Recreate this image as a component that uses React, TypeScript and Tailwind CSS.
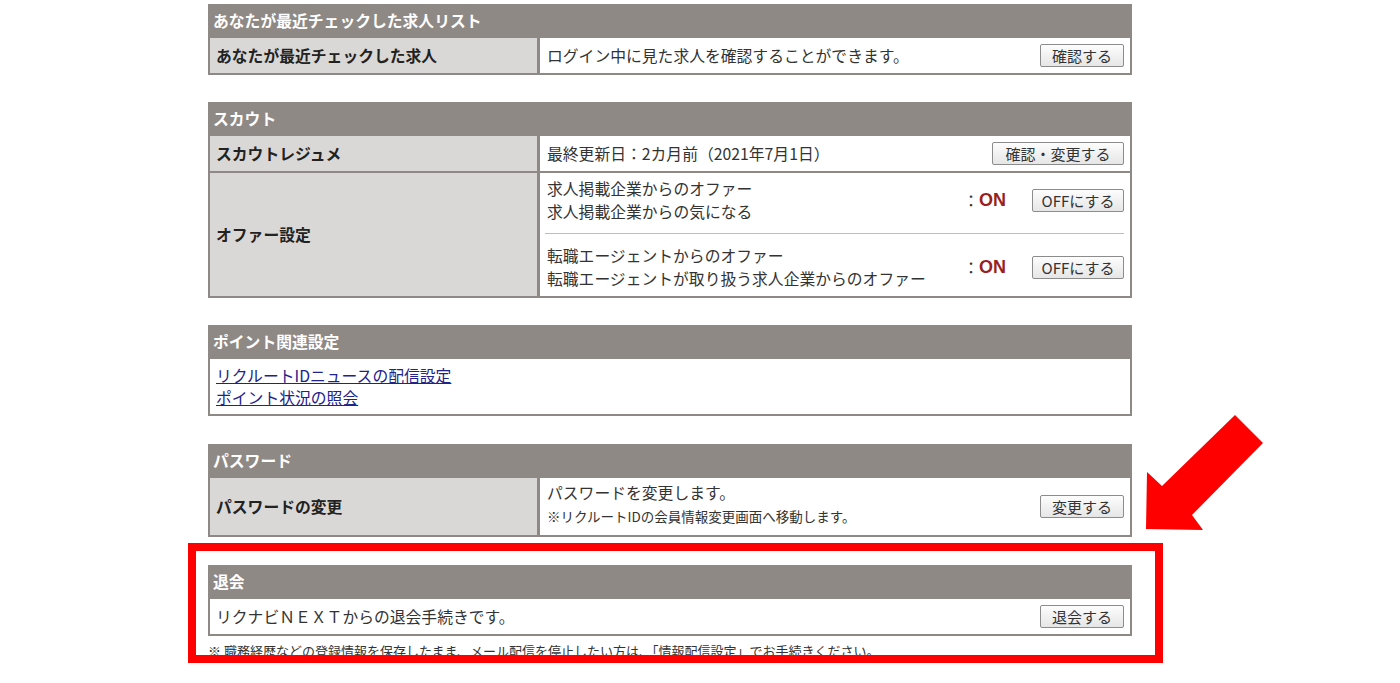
import React from "react";

const FONT = { fontFamily: '"Noto Sans CJK JP", "Noto Sans", sans-serif' };

function Btn({ w, children }: { w: string; children: React.ReactNode }) {
  return (
    <button
      className={`${w} h-[23px] shrink-0 border border-[#8c8c8c] rounded-[2px] bg-gradient-to-b from-[#fdfdfd] to-[#e6e6e6] text-[15px] leading-[21px] text-[#333] flex items-center justify-center`}
    >
      {children}
    </button>
  );
}

function Header({ children }: { children: React.ReactNode }) {
  return (
    <div className="h-[34px] bg-[#8f8985] px-[5px] flex items-center text-white font-bold text-[15.8px]">
      {children}
    </div>
  );
}

function Label({ children }: { children: React.ReactNode }) {
  return (
    <div className="w-[327px] shrink-0 bg-[#d9d8d6] pl-[6px] flex items-center font-bold text-[15.8px] text-[#222]">
      {children}
    </div>
  );
}

function Off() {
  return (
    <div className="flex items-center shrink-0">
      <span className="text-[16px] text-[#333]">：</span>
      <span
        className="text-[18px] font-bold text-[#9a1f1f] leading-none"
        style={{ fontFamily: '"Liberation Sans", Arial, sans-serif' }}
      >
        ON
      </span>
      <div className="w-[26px]" />
      <Btn w="w-[92px]">OFFにする</Btn>
    </div>
  );
}

export default function App() {
  return (
    <div className="relative w-[1400px] h-[683px] overflow-hidden bg-white text-[#333]" style={FONT}>
      <div className="pt-[4px] pl-[208px] w-[1200px]">
        {/* Section 1 */}
        <div className="w-[924px] bg-[#8f8985] px-[2px] pb-[2px]">
          <div className="-mx-[2px]">
            <Header>あなたが最近チェックした求人リスト</Header>
          </div>
          <div className="flex gap-[3px] h-[35px]">
            <Label>あなたが最近チェックした求人</Label>
            <div className="flex-1 bg-white pl-[7px] pr-[6px] flex items-center justify-between text-[15.8px]">
              <span>ログイン中に見た求人を確認することができます。</span>
              <Btn w="w-[84px]">確認する</Btn>
            </div>
          </div>
        </div>

        {/* Section 2 */}
        <div className="mt-[27px] w-[924px] bg-[#8f8985] px-[2px] pb-[2px]">
          <div className="-mx-[2px]">
            <Header>スカウト</Header>
          </div>
          <div className="flex gap-[3px] h-[35px]">
            <Label>スカウトレジュメ</Label>
            <div className="flex-1 bg-white pl-[7px] pr-[6px] flex items-center justify-between text-[15.8px]">
              <span>最終更新日：2カ月前（2021年7月1日）</span>
              <Btn w="w-[132px]">確認・変更する</Btn>
            </div>
          </div>
          <div className="flex gap-[3px] h-[123px] mt-[2px]">
            <Label>オファー設定</Label>
            <div className="flex-1 bg-white pl-[7px] pr-[6px] pt-[4px] text-[15.8px] leading-[23px]">
              <div className="flex items-center">
                <div className="flex-1">
                  <div>求人掲載企業からのオファー</div>
                  <div>求人掲載企業からの気になる</div>
                </div>
                <Off />
              </div>
              <div className="h-px bg-[#bdbdbd] my-[10px] -ml-[2px]" />
              <div className="flex items-center">
                <div className="flex-1">
                  <div>転職エージェントからのオファー</div>
                  <div>転職エージェントが取り扱う求人企業からのオファー</div>
                </div>
                <Off />
              </div>
            </div>
          </div>
        </div>

        {/* Section 3 */}
        <div className="mt-[27px] w-[924px] bg-[#8f8985] px-[2px] pb-[2px]">
          <div className="-mx-[2px]">
            <Header>ポイント関連設定</Header>
          </div>
          <div className="h-[55px] bg-white pl-[6px] pt-[6px] text-[15.8px] leading-[22px]">
            <div>
              <a href="#" className="text-[#22228b] underline">リクルートIDニュースの配信設定</a>
            </div>
            <div>
              <a href="#" className="text-[#22228b] underline">ポイント状況の照会</a>
            </div>
          </div>
        </div>

        {/* Section 4 */}
        <div className="mt-[28px] w-[924px] bg-[#8f8985] px-[2px] pb-[2px]">
          <div className="-mx-[2px]">
            <Header>パスワード</Header>
          </div>
          <div className="flex gap-[3px] h-[57px]">
            <Label>パスワードの変更</Label>
            <div className="flex-1 bg-white pl-[7px] pr-[6px] flex items-center justify-between">
              <div className="self-start pt-[4px]">
                <div className="text-[15.8px] leading-[22px]">パスワードを変更します。</div>
                <div className="text-[13.5px] leading-[24px]">※リクルートIDの会員情報変更画面へ移動します。</div>
              </div>
              <Btn w="w-[84px]">変更する</Btn>
            </div>
          </div>
        </div>

        {/* Red annotated box */}
        <div className="mt-[6px] -ml-[20px] w-[975px] border-[8px] border-[#ff0000]">
          <div className="h-[104px] overflow-hidden pl-[12px] pt-[14px]">
            <div className="w-[924px] bg-[#8f8985] px-[2px] pb-[2px]">
              <div className="-mx-[2px]">
                <Header>退会</Header>
              </div>
              <div className="h-[35px] bg-white pl-[6px] pr-[6px] flex items-center justify-between text-[15.8px]">
                <span>リクナビＮＥＸＴからの退会手続きです。</span>
                <Btn w="w-[84px]">退会する</Btn>
              </div>
            </div>
            <div className="mt-[6px] text-[13px] leading-[18px] text-[#333] whitespace-nowrap">
              ※ 職務経歴などの登録情報を保存したまま、メール配信を停止したい方は、「情報配信設定」でお手続きください。
            </div>
          </div>
        </div>
      </div>

      {/* Arrow */}
      <svg className="absolute left-0 top-0" width="1400" height="683" viewBox="0 0 1400 683">
        <polygon
          points="1235,415 1263,443 1192,515 1203,530 1146,529 1147,472 1162,486"
          fill="#ff0000"
        />
      </svg>
    </div>
  );
}
